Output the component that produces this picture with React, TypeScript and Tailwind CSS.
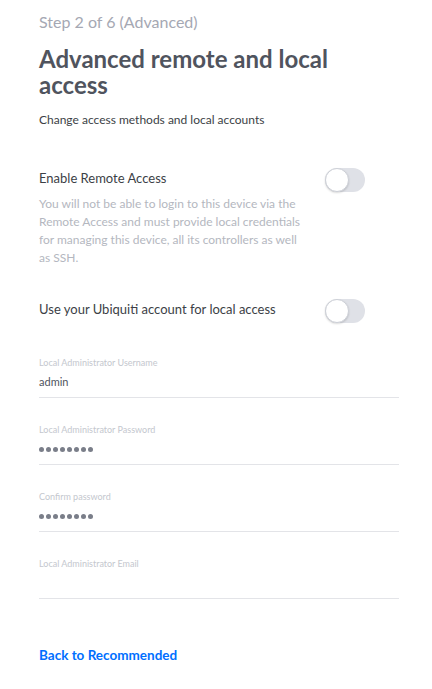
import React from 'react'

// Simple presentational toggle (off state)
function Toggle() {
  return (
    <div className="relative h-[24px] w-[40px] shrink-0 rounded-full bg-[#dfe1e7]">
      <div className="absolute left-0 top-0 h-[24px] w-[24px] rounded-full border border-[#cdd0d7] bg-white shadow-[0_1px_2px_rgba(0,0,0,0.15)]" />
    </div>
  )
}

function Field({ label, value, dots }: { label: string; value?: string; dots?: boolean }) {
  return (
    <div className="mt-[26px] border-b border-[#e3e4e8] pb-[7px] first:mt-0">
      <div className="text-[9px] leading-[12px] text-[#c4c7ce]">{label}</div>
      <div className="mt-[5px] flex h-[16px] items-center text-[11px] leading-[16px] text-[#50545e]">
        {dots ? (
          <div className="flex gap-[2px]">
            {Array.from({ length: 8 }).map((_, i) => (
              <span key={i} className="h-[5px] w-[5px] rounded-full bg-[#7a7e89]" />
            ))}
          </div>
        ) : (
          value
        )}
      </div>
    </div>
  )
}

export default function App() {
  return (
    <div
      className="min-h-[689px] w-[432px] bg-white pl-[39px] pr-[33px] pt-[13px]"
      style={{ fontFamily: 'Lato, "Open Sans", sans-serif' }}
    >
      <div className="text-[16px] leading-[18px] text-[#a5a8b3]">Step 2 of 6 (Advanced)</div>
      <h1 className="mt-[15px] text-[24px] font-bold leading-[26px] text-[#50545e]">
        Advanced remote and local access
      </h1>
      <p className="mt-[14px] text-[12px] leading-[16px] text-[#3c3f46]">
        Change access methods and local accounts
      </p>

      {/* Remote access */}
      <div className="mt-[40px] flex w-[326px] items-start justify-between">
        <div className="text-[13px] leading-[20px] text-[#3c3f46]">Enable Remote Access</div>
        <Toggle />
      </div>
      <p className="mt-[3px] w-[264px] text-[12px] leading-[18px] text-[#b4b7c0]">
        You will not be able to login to this device via the Remote Access and must provide local
        credentials for managing this device, all its controllers as well as SSH.
      </p>

      {/* Ubiquiti account */}
      <div className="mt-[32px] flex w-[326px] items-start justify-between">
        <div className="text-[13px] leading-[20px] text-[#3c3f46]">
          Use your Ubiquiti account for local access
        </div>
        <Toggle />
      </div>

      <div className="mt-[34px] flex flex-col">
        <Field label="Local Administrator Username" value="admin" />
        <Field label="Local Administrator Password" dots />
        <Field label="Confirm password" dots />
        <Field label="Local Administrator Email" value="" />
      </div>

      <div className="mt-[47px] text-[13.5px] font-bold leading-[18px] text-[#006fff]">
        Back to Recommended
      </div>
    </div>
  )
}
